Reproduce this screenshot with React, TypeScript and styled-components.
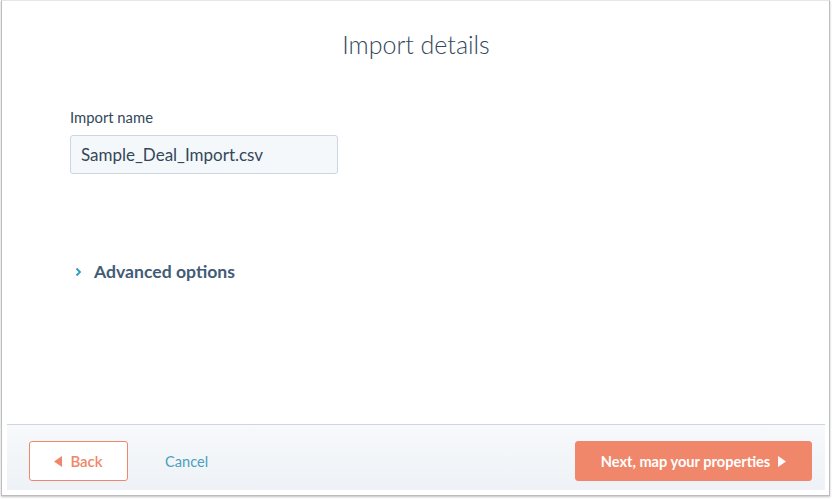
import React from "react";
import styled, { createGlobalStyle } from "styled-components";

const GlobalStyle = createGlobalStyle`
  html, body {
    margin: 0;
    padding: 0;
    background: #ffffff;
  }
  body {
    font-family: Lato, "Open Sans", "Liberation Sans", sans-serif;
    color: #33475b;
  }
`;

const Page = styled.div`
  width: 832px;
  height: 499px;
  background: #ffffff;
  box-sizing: border-box;
  padding: 0 2px 3px 1px;
  display: flex;
`;

const Panel = styled.div`
  flex: 1;
  display: flex;
  flex-direction: column;
  background: #ffffff;
  border: 1px solid #bdbdbd;
  border-top-color: #e6e6e6;
  box-shadow: 0 1px 2px rgba(0, 0, 0, 0.25);
  padding: 0 4px 5px 5px;
`;

const Body = styled.div`
  flex: 1;
  display: flex;
  flex-direction: column;
  padding: 27px 0 0 63px;
`;

const Title = styled.h1`
  margin: 0 0 0 -63px;
  text-align: center;
  font-weight: 300;
  font-size: 25px;
  line-height: 32px;
  color: #33475b;
`;

const Field = styled.div`
  display: flex;
  flex-direction: column;
  margin-top: 48px;
`;

const Label = styled.label`
  font-size: 14.8px;
  line-height: 18px;
  color: #33475b;
  margin-bottom: 9px;
`;

const Input = styled.input`
  width: 268px;
  height: 39px;
  box-sizing: border-box;
  background: #f5f8fa;
  border: 1px solid #cbd6e2;
  border-radius: 3px;
  padding: 0 10px;
  font-family: inherit;
  font-size: 17px;
  color: #33475b;
  outline: none;
`;

const Toggle = styled.div`
  display: flex;
  align-items: center;
  gap: 12px;
  margin-top: 87px;
  padding-left: 5px;
  font-size: 17.6px;
  font-weight: 700;
  color: #425b76;
`;

const Footer = styled.div`
  height: 66px;
  box-sizing: border-box;
  border-top: 1px solid #cbd6e2;
  background: linear-gradient(#f7f9fb, #eef2f6);
  display: flex;
  align-items: center;
  padding: 7px 13px 0 22px;
`;

const Button = styled.button<{ $primary?: boolean }>`
  height: 40px;
  box-sizing: border-box;
  border-radius: 3px;
  border: 1px solid #f0876a;
  background: ${({ $primary }) => ($primary ? "#f0876a" : "#ffffff")};
  color: ${({ $primary }) => ($primary ? "#ffffff" : "#f0876a")};
  font-family: inherit;
  font-size: ${({ $primary }) => ($primary ? "14.6px" : "15px")};
  font-weight: ${({ $primary }) => ($primary ? 700 : 600)};
  display: flex;
  align-items: center;
  justify-content: center;
  gap: 8px;
  padding: 0;
  cursor: pointer;
`;

const BackButton = styled(Button)`
  width: 99px;
`;

const NextButton = styled(Button)`
  width: 237px;
  margin-left: auto;
`;

const CancelLink = styled.a`
  margin-left: 37px;
  font-size: 14.6px;
  color: #4a9fc0;
  text-decoration: none;
`;

const Triangle = ({ dir }: { dir: "left" | "right" }) => (
  <svg width="8" height="11" viewBox="0 0 8 11">
    <path d={dir === "left" ? "M8 0 L0 5.5 L8 11 Z" : "M0 0 L8 5.5 L0 11 Z"} fill="currentColor" />
  </svg>
);

const Chevron = () => (
  <svg width="7" height="10" viewBox="0 0 7 10">
    <path d="M1.5 1.5 L5 5 L1.5 8.5" fill="none" stroke="#2a9cbf" strokeWidth="1.8" />
  </svg>
);

export default function App() {
  return (
    <>
      <GlobalStyle />
      <Page>
        <Panel>
          <Body>
            <Title>Import details</Title>
            <Field>
              <Label>Import name</Label>
              <Input defaultValue="Sample_Deal_Import.csv" />
            </Field>
            <Toggle>
              <Chevron />
              Advanced options
            </Toggle>
          </Body>
          <Footer>
            <BackButton>
              <Triangle dir="left" />
              Back
            </BackButton>
            <CancelLink href="#">Cancel</CancelLink>
            <NextButton $primary>
              Next, map your properties
              <Triangle dir="right" />
            </NextButton>
          </Footer>
        </Panel>
      </Page>
    </>
  );
}
